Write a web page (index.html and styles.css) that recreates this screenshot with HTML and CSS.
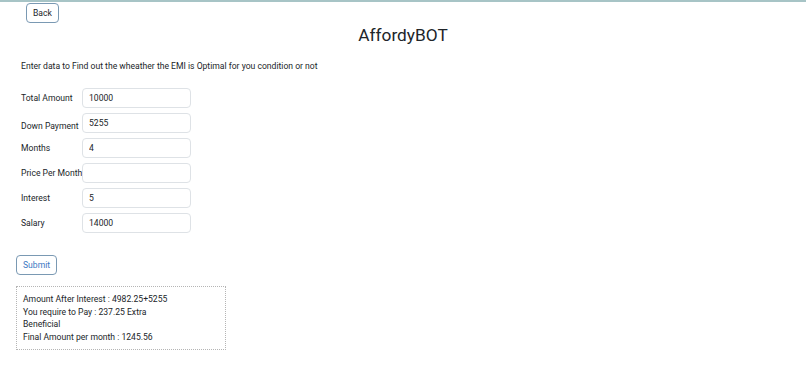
FILE: index.html
```html
<!DOCTYPE html>
<html lang="en">
<head>
    <title>AffordyBOT</title>
    <link rel="stylesheet" href="styles.css">
</head>
<body>
    <div class="top-bar">
        <div class="back-cell">
            <button class="btn btn--back">Back</button>
        </div>
        <h1 class="title">AffordyBOT</h1>
        <div></div>
    </div>
    <div class="main-container">
        <p class="intro">Enter data to Find out the wheather the EMI is Optimal for you condition or not</p>
        <div class="form">
            <div class="form-row">
                <label class="form-label">Total Amount</label>
                <input type="text" class="text-input" value="10000">
            </div>
            <div class="form-row form-row--low">
                <label class="form-label">Down Payment</label>
                <input type="text" class="text-input" value="5255">
            </div>
            <div class="form-row">
                <label class="form-label">Months</label>
                <input type="text" class="text-input" value="4">
            </div>
            <div class="form-row">
                <label class="form-label">Price Per Month</label>
                <input type="text" class="text-input" value="">
            </div>
            <div class="form-row">
                <label class="form-label">Interest</label>
                <input type="text" class="text-input" value="5">
            </div>
            <div class="form-row">
                <label class="form-label">Salary</label>
                <input type="text" class="text-input" value="14000">
            </div>
        </div>
        <button class="btn btn--submit">Submit</button>
        <div class="result">
            <div>Amount After Interest : 4982.25+5255</div>
            <div>You require to Pay : 237.25 Extra</div>
            <div>Beneficial</div>
            <div>Final Amount per month : 1245.56</div>
        </div>
    </div>
</body>
</html>
```

FILE: styles.css
```css
:root {
    --border-radius: 4px;
    --font: Roboto, "Liberation Sans", sans-serif;
}

body{
    margin: 0;
    border-top: 2px solid #a7c4c6;
    font-family: var(--font);
    font-size: 8.6px;
    color: #212529;
}

.top-bar{
    display: grid;
    grid-template-columns: 1fr auto 1fr;
    align-items: start;
}

.back-cell{
    padding: 1px 0 0 26px;
}

.title{
    margin: 19px 0 0 0;
    font-size: 17.3px;
    font-weight: 400;
    line-height: 28px;
}

.btn{
    background-color: #ffffff;
    border: 1px solid #7a99b3;
    border-radius: var(--border-radius);
    font-family: var(--font);
    font-size: 8.6px;
    padding: 0 6px;
    height: 20px;
}

.btn--back{
    color: #212529;
}

.btn--submit{
    color: #3b78c2;
    margin-top: 17px;
}

.main-container{
    padding: 0 16px;
}

.intro{
    margin: 10px 0 15px 5px;
    line-height: 14px;
}

.form{
    margin-left: 5px;
}

.form-row{
    display: flex;
    align-items: center;
    height: 19px;
    margin-bottom: 6px;
}

.form-row--low .form-label{
    padding-top: 6px;
}

.form-label{
    width: 61px;
    white-space: nowrap;
}

.text-input{
    box-sizing: border-box;
    width: 109px;
    height: 20px;
    border: 1px solid #dee2e6;
    border-radius: var(--border-radius);
    padding: 0 6px;
    font-family: var(--font);
    font-size: 8.6px;
    color: #212529;
}

.result{
    margin-top: 11px;
    width: 210px;
    box-sizing: border-box;
    border: 1px dotted #b5b5b5;
    padding: 6px;
    line-height: 12.6px;
}
```
